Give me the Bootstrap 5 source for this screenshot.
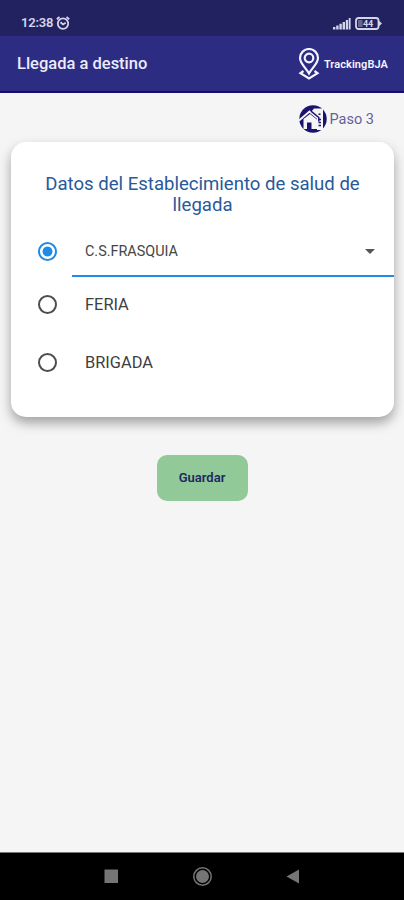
<!DOCTYPE html>
<html lang="es">
<head>
<meta charset="utf-8">
<meta name="viewport" content="width=device-width, initial-scale=1">
<title>Llegada a destino</title>
<link href="https://cdn.jsdelivr.net/npm/bootstrap@5.3.0/dist/css/bootstrap.min.css" rel="stylesheet">
<style>
body{font-family:Roboto,"Liberation Sans",sans-serif;background:#f5f5f5;height:900px;overflow:hidden}
svg{display:block;flex:none}
.status{height:36px;background:#222260;color:#d4d4ea;padding:9px 22px 0 21px}
.clock{font-size:13px;font-weight:600;line-height:28px;letter-spacing:-.2px;height:28px}
.clock-gap{margin-right:3px}
.app-bar{height:57px;background:#2d2c83;border-bottom:2px solid #130d75;padding:0 16px 0 17px;color:#ebebfa}
.app-title{font-size:16.5px;font-weight:500;line-height:20px;padding-top:1px}
.brand{font-size:11px;font-weight:600;line-height:14px;color:#f4f4ff}
.brand-name{letter-spacing:.08px;padding-top:2px}
.step{height:49px;padding:12px 30px 0 0;color:#66619a;font-size:14.5px;line-height:30px}
.step-icon{margin-right:3px}
.panel{margin:0 10px 0 11px;height:275px;border:0;border-radius:15px;box-shadow:0 6px 12px rgba(0,0,0,.34);padding-top:32px}
.panel-title{font-size:18.57px;line-height:21px;font-weight:400;color:#28599a;margin:0}
.choice{padding-left:27px;height:58px}
.choice-first{height:49px;margin-top:11px}
.choice .form-check-input{width:19px;height:19px;margin:0;border:2px solid #4d4d4d;float:none;flex:none;box-shadow:none}
.choice .form-check-input:checked{border-color:#208be5;background:radial-gradient(circle,#208be5 0 4.6px,#fff 5.3px)}
.choice label{font-size:16.4px;color:#3e3e3e;margin-left:28px;line-height:20px;padding-top:1px}
.choice-plain{padding-bottom:2px}
.facility{height:51px;margin-left:15px;padding:2px 19px 0 13px;border-bottom:2px solid #208be5;font-size:14.4px;color:#454545}
.save{width:91px;height:46px;border-radius:10px;background:#91c999;color:#20285f;font-size:13px;font-weight:600;padding:0;margin-top:38px}
.save:hover{background:#82bd8b;color:#20285f}
.sysnav{height:48px;background:#000;border-top:1px solid #777}
</style>
<script src="https://cdn.jsdelivr.net/npm/bootstrap@5.3.0/dist/js/bootstrap.bundle.min.js"></script>
</head>
<body class="d-flex flex-column">
<div class="status d-flex justify-content-between">
  <div class="d-flex align-items-center clock"><span class="clock-gap">12:38</span>
    <svg width="14" height="14" viewBox="0 0 14 14" fill="none" stroke="currentColor" stroke-width="1.800"><circle cx="7" cy="7.600" r="5.200"/><path d="M.8 3.300 3.500 1M13.200 3.300 10.500 1M4.500 6.300 7 8.400l2.700-1.700"/></svg>
  </div>
  <div class="d-flex align-items-center gap-1 clock">
    <svg width="19" height="13" viewBox="0 0 19 13" fill="currentColor"><path d="M1 10h2.400v2.500H1zM4.200 8.600h2.400v3.900H4.200zM7.400 6.800h2.400v5.700H7.400zM10.600 5H13v7.500h-2.400zM13.800 3h2.200v9.500h-2.200zM16.700 1h1.900v11.500h-1.900z"/></svg>
    <svg width="27" height="13" viewBox="0 0 27 13"><rect x="1" y="1" width="22.500" height="11" rx="2.500" fill="none" stroke="currentColor" stroke-width="1.800"/><path d="M24 3.700 27 6.500 24 9.300z" fill="currentColor"/><path d="M3 3h4.500v7H3z" fill="#66668f"/><text x="13" y="9.700" text-anchor="middle" font-size="9" font-weight="700" fill="currentColor">44</text></svg>
  </div>
</div>
<header class="app-bar d-flex align-items-center justify-content-between">
  <span class="app-title">Llegada a destino</span>
  <div class="d-flex align-items-center brand">
    <svg class="me-1" width="22" height="32" viewBox="0 0 22 32" fill="none" stroke="currentColor" stroke-width="2.200"><path d="M11 25.500C8 20 2 15.500 2 10a9 9 0 0 1 18 0c0 5.500-6 10-9 15.500z"/><circle cx="11" cy="10" r="4.300"/><path d="M5.500 23 2.500 25.200l8.500 5.200 8.500-5.200-3-2.200"/></svg>
    <span class="brand-name">TrackingBJA</span>
  </div>
</header>
<main class="flex-grow-1">
  <div class="step d-flex justify-content-end">
    <svg class="step-icon" width="28" height="28" viewBox="0 0 28 28"><circle cx="14" cy="14" r="13.700" fill="#1b136f"/><path d="M15 3.500h9V25h-6V12l-6-5z" fill="#f5f5f5"/><path d="M4.500 14 11 9l7.500 6v9h-14z" fill="#f5f5f5"/><path d="M0 15.500 10.500 6.500 19 13.500" fill="none" stroke="#f5f5f5" stroke-width="2"/><path d="M8 17.500h4.500V24H8z" fill="#1b136f"/><path d="M12 6.200 19.800 12.500v4" fill="none" stroke="#1b136f" stroke-width="1.500"/><path d="M19.500 9.300h2M20 14.500h2M19.500 17.500h2.500M19.500 20.500h2.500" stroke="#1b136f" stroke-width="1.400"/></svg>
    <span class="step-text">Paso 3</span>
  </div>
  <section class="card panel">
    <h1 class="panel-title text-center">Datos del Establecimiento de salud de<br>llegada</h1>
    <div class="choice choice-first d-flex align-items-center">
      <input class="form-check-input" type="radio" name="place" aria-label="Establecimiento" checked>
      <div class="facility flex-grow-1 d-flex align-items-center justify-content-between"><span class="fac">C.S.FRASQUIA</span>
        <svg width="10" height="5" viewBox="0 0 10 5"><path d="M0 0h10L5 5z" fill="#555"/></svg></div>
    </div>
    <div class="choice choice-plain d-flex align-items-center"><input class="form-check-input" type="radio" name="place" id="feria"><label for="feria">FERIA</label></div>
    <div class="choice choice-plain d-flex align-items-center"><input class="form-check-input" type="radio" name="place" id="brigada"><label for="brigada">BRIGADA</label></div>
  </section>
  <div class="text-center"><button class="btn save border-0" type="button">Guardar</button></div>
</main>
<nav class="sysnav d-flex align-items-center">
  <svg width="404" height="47" viewBox="0 0 404 47" fill="#757575"><rect x="104.500" y="16.500" width="13.500" height="13.500"/><circle cx="202.500" cy="23.500" r="6.500"/><circle cx="202.500" cy="23.500" r="8.700" fill="none" stroke="#757575" stroke-width="1.500"/><path d="M299 16.500v14L286.500 23.500z"/></svg>
</nav>
</body>
</html>
